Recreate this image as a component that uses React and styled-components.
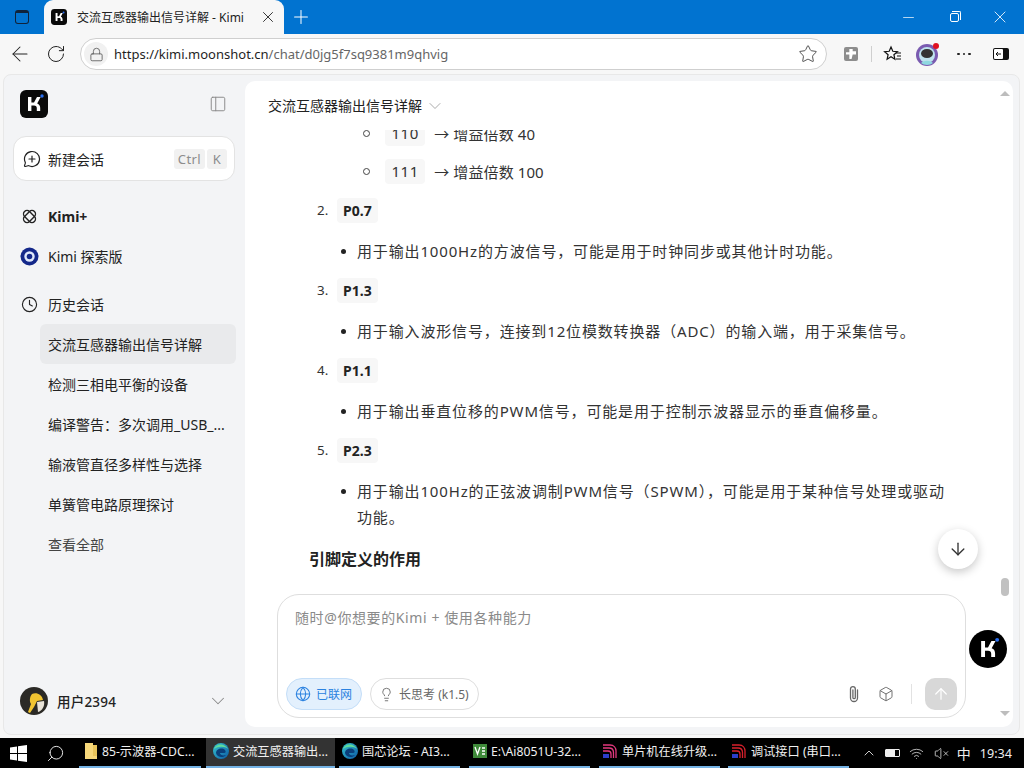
import React from "react";
import styled, { createGlobalStyle } from "styled-components";
import {
  ArrowLeft, RotateCw, Star, X, Plus, Minus, Lock, PanelLeft, MessageCirclePlus, Clock, ChevronDown,
  Globe, Lightbulb, Box, ArrowUp, ArrowDown, Search, ChevronUp, VolumeX, Wifi,
} from "lucide-react";

const FONT = `"Noto Sans", "Noto Sans CJK SC", sans-serif`;

const Global = createGlobalStyle`
  html, body { margin: 0; padding: 0; height: 100%; overflow: hidden; }
  body { font-family: ${FONT}; color: #1f1f1f; background: #000; }
  * { box-sizing: border-box; }
`;

const Screen = styled.div`
  width: 1024px; height: 768px; display: flex; flex-direction: column; position: relative; overflow: hidden;
`;

/* browser chrome */
const TitleBar = styled.div`
  height: 34px; background: #0173d0; display: flex; align-items: flex-end; flex: none; color: #fff;
`;
const TabToggle = styled.div`
  width: 44px; height: 34px; display: flex; align-items: center; justify-content: center; color: #111;
`;
const ToggleGlyph = styled.div`
  width: 14px; height: 14px; border: 1.5px solid #10233a; border-top-width: 3px; border-radius: 3px;
`;
const Tab = styled.div`
  width: 240px; height: 34px; background: #f7f7f7; border-radius: 9px 9px 0 0; display: flex; align-items: center;
  padding: 0 7px 0 7px; color: #222;
`;
const TabTitle = styled.span`
  margin-left: 10px; flex: 1; white-space: nowrap; font-size: 12px;
`;
const TabPlus = styled.div`
  width: 34px; height: 34px; display: flex; align-items: center; justify-content: center; color: #fff;
`;
const WinControls = styled.div`
  margin-left: auto; display: flex; height: 34px; align-items: center; padding-right: 1px;
`;
const WinBtn = styled.div`
  width: 46px; display: flex; justify-content: center; align-items: center; color: #fff;
`;
const RestoreGlyph = styled.div`
  width: 9px; height: 9px; border: 1px solid #fff; border-radius: 2px; position: relative;
  &::after { content: ""; position: absolute; left: 1px; top: -3px; width: 8px; height: 8px;
    border-top: 1px solid #fff; border-right: 1px solid #fff; border-radius: 0 2px 0 0; }
`;
const Toolbar = styled.div`
  height: 40px; background: #f7f7f7; display: flex; align-items: center; flex: none; padding-left: 8px;
`;
const NavBtn = styled.div`
  width: ${p => p.$w || 36}px; height: 32px; display: flex; align-items: center; justify-content: center; color: #222; flex: none;
`;
const Address = styled.div`
  width: 747px; height: 32px; border: 1px solid #cfcfcf; border-radius: 16px; background: #fff;
  display: flex; align-items: center; padding: 0 8px 0 3px; flex: none;
`;
const LockChip = styled.div`
  width: 24px; height: 24px; border-radius: 12px; background: #f1f1f1; display: flex; align-items: center; justify-content: center; color: #555;
`;
const Url = styled.div`
  margin-left: 6px; flex: 1; font-size: 13px; color: #1f1f1f; white-space: nowrap;
  span { color: #666; }
`;
const TIBadge = styled.div`
  width: 14px; height: 14px; background: #8d8d8d; border-radius: 2px; display: flex; align-items: center; justify-content: center;
`;
const ToolSep = styled.div`
  width: 1px; height: 16px; background: #cfcfcf; margin-left: -4px; flex: none;
`;
const Dots = styled.div`
  display: flex; gap: 3px;
  i { width: 2.5px; height: 2.5px; border-radius: 50%; background: #222; display: block; }
`;

/* page */
const Frame = styled.div`
  flex: 1; min-height: 0; background: #f7f7f7; padding: 0 4px 3px 3px; display: flex;
`;
const Panel = styled.div`
  flex: 1; display: flex; background: #f3f4f6; border: 1px solid #e8e8e8; border-radius: 8px; padding: 6px 6px 7px 0; min-width: 0;
`;
const Sidebar = styled.aside`
  width: 241px; flex: none; display: flex; flex-direction: column; padding: 9px 9px 0 9px; font-size: 14px;
`;
const SideTop = styled.div`
  height: 28px; display: flex; align-items: center; justify-content: space-between; padding: 0 9px 0 7px; color: #8a8a8a;
`;
const NewChat = styled.div`
  margin-top: 18px; height: 45px; background: #fff; border: 1px solid #e3e3e3; border-radius: 13px; display: flex; align-items: center;
  padding: 0 7px 0 8px; gap: 7px; color: #222; margin-right: 1px;
`;
const NewLabel = styled.span` flex: 1; `;
const Kbd = styled.span`
  height: 20px; padding: 0 4px; min-width: 20px; background: #f1f1f1; border-radius: 3px; color: #8c8c8c; font-size: 13px;
  display: inline-flex; align-items: center; justify-content: center; margin-left: -5px; letter-spacing: .4px;
`;
const NavRow = styled.div`
  height: 40px; display: flex; align-items: center; gap: 9px; padding-left: 7px; margin-top: ${p => p.$mt || 0}px;
  font-weight: ${p => (p.$bold ? 700 : 400)}; color: #222;
`;
const IconSlot = styled.div`
  width: 19px; height: 19px; display: flex; align-items: center; justify-content: center; flex: none; color: #222;
`;
const HistList = styled.div`
  margin-left: 27px; display: flex; flex-direction: column;
`;
const HistItem = styled.div`
  height: 40px; border-radius: 6px; display: flex; align-items: center; padding: 0 8px; white-space: nowrap; overflow: hidden;
  background: ${p => (p.$active ? "#e9eaec" : "transparent")}; color: ${p => (p.$muted ? "#444" : "#222")};
`;
const UserRow = styled.div`
  margin-top: auto; height: 28px; margin-bottom: 12px; display: flex; align-items: center; padding: 0 7px 0 7px; color: #8a8a8a;
`;
const UserName = styled.span`
  margin-left: 9px; flex: 1; color: #222; font-weight: 500; font-size: 13.5px; letter-spacing: .2px;
`;

const Main = styled.main`
  flex: 1; min-width: 0; background: #fff; border-radius: 10px; display: flex; flex-direction: column; position: relative;
`;
const ChatHeader = styled.div`
  height: 49px; flex: none; padding: 15px 0 0 23px; display: flex; align-items: flex-start; gap: 3px; font-size: 14px; color: #222;
  line-height: 20px;
  svg { color: #9a9a9a; }
`;
const Scroll = styled.div`
  height: 464px; flex: none; overflow: hidden; font-size: 15px; color: #333;
`;
const Doc = styled.div`
  margin-top: -16px; padding-left: 72px; display: flex; flex-direction: column;
`;
const Row = styled.div`
  height: 38px; display: flex; align-items: center; white-space: nowrap; position: relative; margin-top: ${p => p.$mt || 0}px;
`;
const SubRow = styled(Row)`
  padding-left: 68px; letter-spacing: .1px;
  &::before { content: ""; position: absolute; left: 46px; top: 16px; width: 5px; height: 5px; border: 1px solid #444; border-radius: 50%; }
`;
const Chip = styled.span`
  height: 25px; padding: 0 6.5px; background: #f7f7f7; border-radius: 4px; display: inline-flex; align-items: center; font-size: 15px;
  letter-spacing: .5px; margin-right: 9px;
`;
const Num = styled.span`
  width: 20px; font-size: 13.4px; color: #333;
`;
const BoldChip = styled(Chip)`
  font-weight: 700; padding: 0 6px; font-size: 14px; letter-spacing: 0; color: #222;
`;
const Bullet = styled.div`
  position: relative; padding-left: 40px; line-height: 26px; margin-top: ${p => p.$mt || 0}px; width: 636px; letter-spacing: .85px;
  height: ${p => p.$h || 38}px; display: flex; align-items: ${p => (p.$top ? "flex-start" : "center")};
  &::before { content: ""; position: absolute; left: 24px; top: ${p => (p.$top ? 11 : 17)}px; width: 5px; height: 5px; background: #222; border-radius: 50%; }
`;
const H3 = styled.div`
  margin-left: -8px; margin-top: 16px; font-size: 16px; font-weight: 700; color: #222;
`;
const Composer = styled.div`
  width: 689px; height: 124px; margin-left: 32px; flex: none; border: 1px solid #dedede; border-radius: 22px; background: #fff;
  display: flex; flex-direction: column; padding: 13px 8px 7px 8px;
`;
const Placeholder = styled.div`
  padding-left: 9px; font-size: 14px; letter-spacing: .6px; color: #8a8a8a; line-height: 20px; flex: 1;
`;
const ComposerBar = styled.div`
  display: flex; align-items: center; height: 32px;
`;
const Pill = styled.div`
  height: 32px; padding: 0 9px 0 8px; border-radius: 16px; display: flex; align-items: center; gap: 5px; font-size: 12px; margin-right: 8px;
  border: 1px solid ${p => (p.$on ? "#c4def8" : "#dedede")}; background: ${p => (p.$on ? "#e3f0fd" : "#fff")}; color: ${p => (p.$on ? "#2b82e0" : "#666")};
`;
const Spacer = styled.div` flex: 1; `;
const ComposerIcon = styled.div`
  width: 32px; display: flex; align-items: center; justify-content: center; color: #666;
`;
const Divider = styled.div`
  width: 1px; height: 20px; background: #e2e2e2; margin: 0 13px 0 9px;
`;
const SendBtn = styled.div`
  width: 32px; height: 32px; background: #d8d8d8; border-radius: 10px; display: flex; align-items: center; justify-content: center; color: #fff;
`;
const FloatDown = styled.div`
  position: absolute; left: 693px; top: 448px; width: 40px; height: 40px; border-radius: 50%; background: #fff;
  box-shadow: 0 3px 10px rgba(0,0,0,.22); display: flex; align-items: center; justify-content: center; color: #333;
`;
const FloatK = styled.div`
  position: absolute; left: 724px; top: 549px; width: 38px; height: 38px; border-radius: 50%; background: #000;
  display: flex; align-items: center; justify-content: center;
`;
const ScrollUp = styled.div`
  position: absolute; right: 3px; top: 10px; width: 0; height: 0; border: 5px solid transparent; border-bottom: 5px solid #bdbdbd; border-top: 0;
`;
const ScrollDown = styled.div`
  position: absolute; right: 3px; bottom: 11px; width: 0; height: 0; border: 5px solid transparent; border-top: 5px solid #bdbdbd; border-bottom: 0;
`;
const Thumb = styled.div`
  position: absolute; right: 4px; top: 497px; width: 8px; height: 18px; background: #c1c1c1; border-radius: 4px;
`;

/* taskbar */
const Taskbar = styled.div`
  height: 30px; background: #000; display: flex; align-items: stretch; flex: none; color: #f0f0f0; font-size: 12.2px; position: relative;
`;
const StartBtn = styled.div`
  width: 37px; display: grid; place-items: center; flex: none;
`;
const SearchBtn = styled.div`
  width: 36px; display: grid; place-items: center; flex: none; color: #eee;
  svg { transform: scaleX(-1); }
`;
const TaskList = styled.div` display: flex; margin-left: 6px; `;
const TaskItem = styled.div`
  width: ${p => p.$w}px; margin-left: ${p => p.$ml || 0}px; display: flex; align-items: center; gap: 4px; padding: 0 0 2px ${p => p.$pl || 4}px;
  border-bottom: 2px solid #74b2e4; white-space: nowrap; overflow: hidden; background: ${p => (p.$active ? "#333" : "transparent")};
`;
const Tray = styled.div`
  margin-left: auto; display: flex; align-items: center; color: #eee; padding-right: 12px;
`;
const TrayCell = styled.div`
  display: flex; align-items: center; justify-content: center; width: ${p => p.$w}px;
`;
const BatteryGlyph = styled.div`
  width: 15px; height: 8px; border: 1px solid #eee; border-radius: 1px; background: linear-gradient(90deg,#eee 70%, transparent 70%);
`;
const ImeLabel = styled.span` font-size: 14px; `;
const Clock24 = styled.span` font-size: 12.6px; margin-left: 5px; `;

const KLogo = ({ size = 28, round }) => (
  <svg width={size} height={size} viewBox="0 0 28 28">
    {round ? null : <rect width="28" height="28" rx="6" fill="#0a0a0a" />}
    <path d="M8 7h3.4v5.6H14L17 7h3.6l-3.4 6.4c2 .6 3 2.2 3 4.6V21h-3.4v-2.8c0-1.8-.9-2.6-2.8-2.6h-2.6V21H8z" fill="#fff" />
    <circle cx="22" cy="6" r="1.7" fill="#2a6ff0" />
  </svg>
);
const EdgeIcon = () => (
  <svg width="16" height="16" viewBox="0 0 16 16">
    <defs>
      <linearGradient id="eg" x1="0" y1="0" x2="1" y2="1"><stop offset="0" stopColor="#37c6d0" /><stop offset="1" stopColor="#0c59a4" /></linearGradient>
    </defs>
    <circle cx="8" cy="8" r="8" fill="url(#eg)" />
    <path d="M3 10c0-4 6-6 9-3 1 1 1 3-1 3H7c0 2 3 3 6 2-2 3-9 3-10-2z" fill="#0b3f7a" />
    <path d="M1 6c2-6 11-6 14 0-3-3-10-3-14 0z" fill="#5fdc9a" />
  </svg>
);
const StcIcon = ({ c1 = "#e3387e", c2 = "#2c3ec9" }) => (
  <svg width="16" height="16" viewBox="0 0 16 16" fill="none">
    <path d="M1 2h7c4 0 6 3 6 6v7" stroke={c1} strokeWidth="1.3" />
    <path d="M1 5h6c3 0 4.500 2 4.500 4.500V15" stroke={c1} strokeWidth="1.3" />
    <path d="M1 8h5c2 0 3 1.500 3 3v4" stroke={c1} strokeWidth="1.3" />
    <rect x="1" y="11" width="6" height="4" fill={c2} />
  </svg>
);

const hist = ["检测三相电平衡的设备", "编译警告：多次调用_USB_...", "输液管直径多样性与选择", "单簧管电路原理探讨"];

export default function App() {
  return (
    <Screen>
      <Global />
      <TitleBar>
        <TabToggle><ToggleGlyph /></TabToggle>
        <Tab>
          <KLogo size={16} />
          <TabTitle>交流互感器输出信号详解 - Kimi</TabTitle>
          <X size={18} strokeWidth={1.2} />
        </Tab>
        <TabPlus><Plus size={22} strokeWidth={1.1} /></TabPlus>
        <WinControls>
          <WinBtn><Minus size={17} strokeWidth={1} /></WinBtn>
          <WinBtn><RestoreGlyph /></WinBtn>
          <WinBtn><X size={20} strokeWidth={1} /></WinBtn>
        </WinControls>
      </TitleBar>
      <Toolbar>
        <NavBtn $w={24}><ArrowLeft size={26} strokeWidth={1.05} /></NavBtn>
        <NavBtn $w={48}><RotateCw size={20} strokeWidth={1.2} /></NavBtn>
        <Address>
          <LockChip><Lock size={15} strokeWidth={1.3} /></LockChip>
          <Url>https://kimi.moonshot.cn<span>/chat/d0jg5f7sq9381m9qhvig</span></Url>
          <Star size={20} strokeWidth={1.1} color="#444" />
        </Address>
        <NavBtn $w={48}><TIBadge><svg width="10" height="10" viewBox="0 0 9 9"><path d="M3 0h3v2h3v3H6l-1 4H3V5H0V3h3z" fill="#fff" /></svg></TIBadge></NavBtn>
        <ToolSep />
        <NavBtn $w={40}>
          <svg width="19" height="19" viewBox="0 0 19 19" fill="none" stroke="#111" strokeWidth="1.2">
            <path d="M8 2l1.800 4.300 4.600.4-3.500 3 1 4.500L8 11.800l-3.900 2.400 1-4.500-3.500-3 4.600-.4z" />
            <path d="M13 8h5M14 11h4M13 14h5" />
          </svg>
        </NavBtn>
        <NavBtn $w={32}>
          <svg width="26" height="26" viewBox="0 0 26 26">
            <circle cx="12" cy="14" r="11" fill="#7a5bb0" />
            <circle cx="12" cy="14" r="8" fill="#bfe3ee" />
            <ellipse cx="12" cy="12.500" rx="6" ry="4.500" fill="#333" />
            <path d="M6 22c3-3 9-3 12 0-3 2.500-9 2.500-12 0z" fill="#8fd8e0" />
            <circle cx="21" cy="5" r="3" fill="#e01020" />
          </svg>
        </NavBtn>
        <NavBtn $w={40}><Dots><i /><i /><i /></Dots></NavBtn>
        <NavBtn $w={34}>
          <svg width="16" height="12" viewBox="0 0 16 12">
            <rect width="16" height="12" rx="2" fill="#111" />
            <rect x="1" y="1" width="9" height="10" rx="1" fill="#fff" />
            <path d="M8 6H3M5 4L3 6l2 2" stroke="#111" strokeWidth="1" fill="none" />
          </svg>
        </NavBtn>
      </Toolbar>
      <Frame>
        <Panel>
          <Sidebar>
            <SideTop>
              <KLogo />
              <PanelLeft size={18} strokeWidth={1.3} />
            </SideTop>
            <NewChat>
              <IconSlot><MessageCirclePlus size={18} strokeWidth={1.6} /></IconSlot>
              <NewLabel>新建会话</NewLabel>
              <Kbd>Ctrl</Kbd>
              <Kbd>K</Kbd>
            </NewChat>
            <NavRow $mt={15} $bold>
              <IconSlot>
                <svg width="17" height="17" viewBox="0 0 17 17" fill="none" stroke="#222" strokeWidth="1.4">
                  <rect x="1.500" y="5" width="14" height="7" rx="3.500" transform="rotate(45 8.500 8.500)" />
                  <rect x="1.500" y="5" width="14" height="7" rx="3.500" transform="rotate(-45 8.500 8.500)" />
                </svg>
              </IconSlot>
              Kimi+
            </NavRow>
            <NavRow>
              <IconSlot>
                <svg width="19" height="19" viewBox="0 0 19 19">
                  <circle cx="9.500" cy="9.500" r="9" fill="#14288a" />
                  <circle cx="9.500" cy="9.500" r="5.200" fill="#dfe8fb" />
                  <circle cx="9.500" cy="9.500" r="2.800" fill="#14288a" />
                </svg>
              </IconSlot>
              Kimi 探索版
            </NavRow>
            <NavRow $mt={8}>
              <IconSlot><Clock size={17} strokeWidth={1.6} /></IconSlot>
              历史会话
            </NavRow>
            <HistList>
              <HistItem $active>交流互感器输出信号详解</HistItem>
              {hist.map(t => <HistItem key={t}>{t}</HistItem>)}
              <HistItem $muted>查看全部</HistItem>
            </HistList>
            <UserRow>
              <svg width="28" height="28" viewBox="0 0 28 28">
                <circle cx="14" cy="14" r="14" fill="#2b2a26" />
                <path d="M12 7c4-2 10 0 11 6l-6 1-3 6-4 6-2-1 3-8c-2-3-1-8 1-10z" fill="#f2c531" />
                <path d="M17 15l7-1c1 5-2 10-6 11z" fill="#e9e4d8" />
              </svg>
              <UserName>用户2394</UserName>
              <ChevronDown size={22} strokeWidth={1.1} />
            </UserRow>
          </Sidebar>
          <Main>
            <ChatHeader>
              交流互感器输出信号详解
              <ChevronDown size={20} strokeWidth={1} />
            </ChatHeader>
            <Scroll>
              <Doc>
                <SubRow><Chip>110</Chip>→ 增益倍数 40</SubRow>
                <SubRow><Chip>111</Chip>→ 增益倍数 100</SubRow>
                <Row $mt={1}><Num>2.</Num><BoldChip>P0.7</BoldChip></Row>
                <Bullet $mt={3}>用于输出1000Hz的方波信号，可能是用于时钟同步或其他计时功能。</Bullet>
                <Row $mt={1}><Num>3.</Num><BoldChip>P1.3</BoldChip></Row>
                <Bullet $mt={3}>用于输入波形信号，连接到12位模数转换器（ADC）的输入端，用于采集信号。</Bullet>
                <Row $mt={1}><Num>4.</Num><BoldChip>P1.1</BoldChip></Row>
                <Bullet $mt={3}>用于输出垂直位移的PWM信号，可能是用于控制示波器显示的垂直偏移量。</Bullet>
                <Row $mt={1}><Num>5.</Num><BoldChip>P2.3</BoldChip></Row>
                <Bullet $mt={9} $h={52} $top><span>用于输出100Hz的正弦波调制PWM信号（SPWM），可能是用于某种信号处理或驱动功能。</span></Bullet>
                <H3>引脚定义的作用</H3>
              </Doc>
            </Scroll>
            <Composer>
              <Placeholder>随时@你想要的Kimi + 使用各种能力</Placeholder>
              <ComposerBar>
                <Pill $on><Globe size={16} strokeWidth={1.6} />已联网</Pill>
                <Pill><Lightbulb size={15} strokeWidth={1.4} />长思考 (k1.5)</Pill>
                <Spacer />
                <ComposerIcon>
                  <svg width="16" height="18" viewBox="0 0 16 18" fill="none" stroke="currentColor" strokeWidth="1.3" strokeLinecap="round">
                    <path d="M11.500 5v8a3.500 3.500 0 0 1-7 0V4a2.400 2.400 0 0 1 4.800 0v8.500a1.200 1.200 0 0 1-2.400 0V5" />
                  </svg>
                </ComposerIcon>
                <ComposerIcon><Box size={16} strokeWidth={1.4} /></ComposerIcon>
                <Divider />
                <SendBtn><ArrowUp size={18} strokeWidth={1.6} /></SendBtn>
              </ComposerBar>
            </Composer>
            <ScrollUp />
            <Thumb />
            <ScrollDown />
            <FloatDown><ArrowDown size={20} strokeWidth={1.6} /></FloatDown>
            <FloatK><KLogo size={32} round /></FloatK>
          </Main>
        </Panel>
      </Frame>
      <Taskbar>
        <StartBtn>
          <svg width="17" height="17" viewBox="0 0 17 17" fill="#fff">
            <path d="M0 2.500l7-1V8H0zM8 1.300L17 0v8H8zM0 9h7v6.500l-7-1zM8 9h9v8l-9-1.300z" />
          </svg>
        </StartBtn>
        <SearchBtn><Search size={19} strokeWidth={1.2} /></SearchBtn>
        <TaskList>
          <TaskItem $w={122} $pl={5}>
            <svg width="14" height="16" viewBox="0 0 14 16"><path d="M1 0h8v13l4 0v3H1z" fill="#f6d77a" /><path d="M9 2h4v11H9z" fill="#e9c45a" /></svg>
            85-示波器-CDC...
          </TaskItem>
          <TaskItem $w={129} $ml={5} $pl={7} $active><EdgeIcon />交流互感器输出...</TaskItem>
          <TaskItem $w={121} $ml={4} $pl={3}><EdgeIcon />国芯论坛 - AI3...</TaskItem>
          <TaskItem $w={121} $ml={9} $pl={4}>
            <svg width="14" height="14" viewBox="0 0 14 14"><rect width="14" height="14" fill="#3f8a3a" /><path d="M2 3l2.500 7L7 3M9 4h3M9 7h3M9 10h3" stroke="#fff" strokeWidth="1.300" fill="none" /></svg>
            E:\Ai8051U-32...
          </TaskItem>
          <TaskItem $w={121} $ml={9} $pl={3}><StcIcon />单片机在线升级...</TaskItem>
          <TaskItem $w={121} $ml={8} $pl={3}><StcIcon c1="#d8202c" c2="#2c3ec9" />调试接口 (串口...</TaskItem>
        </TaskList>
        <Tray>
          <TrayCell $w={24}><ChevronUp size={16} strokeWidth={1.3} /></TrayCell>
          <TrayCell $w={23}><BatteryGlyph /></TrayCell>
          <TrayCell $w={26}><Wifi size={15} strokeWidth={1.2} /></TrayCell>
          <TrayCell $w={23}><VolumeX size={15} strokeWidth={1.2} /></TrayCell>
          <TrayCell $w={22}><ImeLabel>中</ImeLabel></TrayCell>
          <Clock24>19:34</Clock24>
        </Tray>
      </Taskbar>
    </Screen>
  );
}
